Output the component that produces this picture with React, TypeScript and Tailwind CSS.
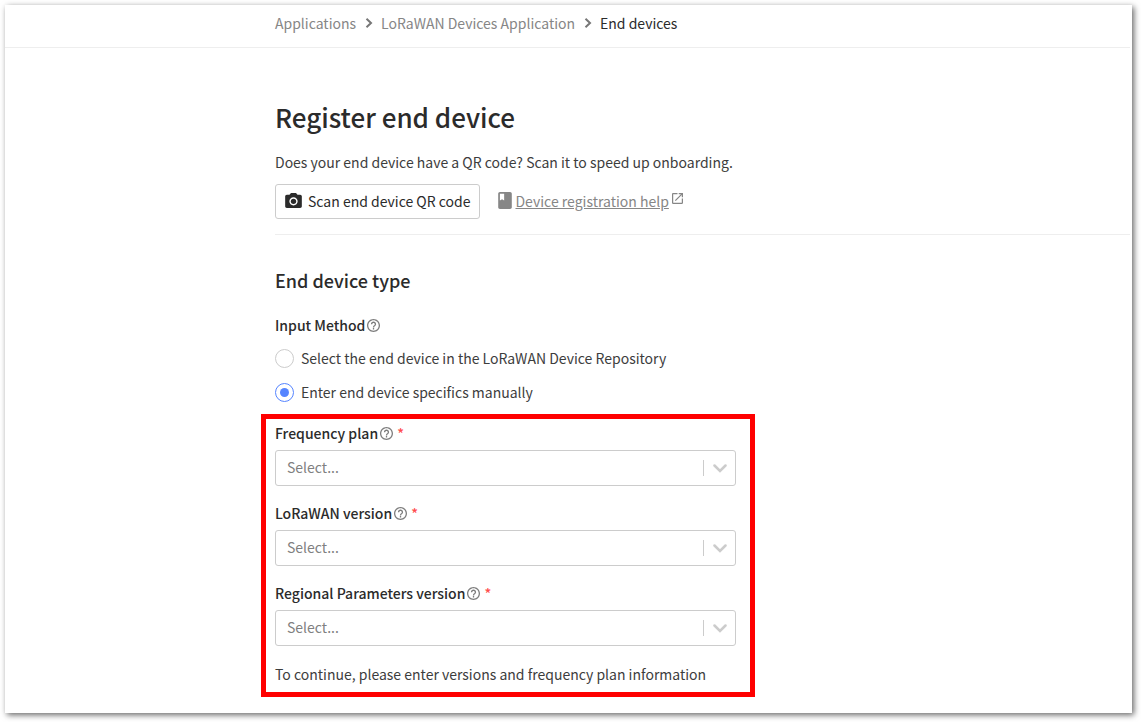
import { useState } from "react";

interface SelectField {
  id: string;
  label: string;
  options: string[];
}

const crumbs = ["Applications", "LoRaWAN Devices Application"];

const methods = [
  { value: "repository", label: "Select the end device in the LoRaWAN Device Repository" },
  { value: "manual", label: "Enter end device specifics manually" },
];

const fields: SelectField[] = [
  { id: "frequency-plan", label: "Frequency plan", options: [] },
  { id: "lorawan-version", label: "LoRaWAN version", options: [] },
  { id: "regional-version", label: "Regional Parameters version", options: [] },
];

function ChevronRight() {
  return (
    <svg viewBox="0 0 8 10" className="h-2.5 w-2 fill-none stroke-[#777777] stroke-2">
      <path d="M1.5 0.8 L6 5 L1.5 9.2" />
    </svg>
  );
}

function HelpIcon() {
  return (
    <svg viewBox="2 2 20 20" className="ml-0.5 size-[13px] fill-[#7d7d7d]">
      <path d="M11 18h2v-2h-2v2zm1-16C6.48 2 2 6.48 2 12s4.480 10 10 10 10-4.480 10-10S17.520 2 12 2zm0 18c-4.410 0-8-3.590-8-8s3.590-8 8-8 8 3.590 8 8-3.590 8-8 8zm0-14c-2.210 0-4 1.790-4 4h2c0-1.100.9-2 2-2s2 .9 2 2c0 2-3 1.750-3 5h2c0-2.250 3-2.500 3-5 0-2.210-1.790-4-4-4z" />
    </svg>
  );
}

function CameraIcon() {
  return (
    <svg viewBox="2 2 20 18" className="h-[15px] w-[17px] fill-[#2b2b2b]">
      <circle cx="12" cy="12" r="3.200" />
      <path d="M9 2L7.170 4H4c-1.100 0-2 .9-2 2v12c0 1.100.9 2 2 2h16c1.100 0 2-.9 2-2V6c0-1.100-.9-2-2-2h-3.170L15 2H9zm3 15c-2.760 0-5-2.240-5-5s2.240-5 5-5 5 2.240 5 5-2.240 5-5 5z" />
    </svg>
  );
}

function BookIcon() {
  return (
    <svg viewBox="4 2 16 20" className="h-[17px] w-3.5 fill-[#868686]">
      <path d="M18 2H6c-1.100 0-2 .9-2 2v16c0 1.100.9 2 2 2h12c1.100 0 2-.9 2-2V4c0-1.100-.9-2-2-2zM6 4h5v8l-2.500-1.500L6 12V4z" />
    </svg>
  );
}

function OpenInNewIcon() {
  return (
    <svg viewBox="3 3 18 18" className="mb-1 size-[11px] fill-[#868686]">
      <path d="M19 19H5V5h7V3H5c-1.110 0-2 .9-2 2v14c0 1.100.89 2 2 2h14c1.100 0 2-.9 2-2v-7h-2v7zM14 3v2h3.590l-9.830 9.830 1.410 1.410L19 6.410V10h2V3h-7z" />
    </svg>
  );
}

function SelectBox({ id, label, options }: SelectField) {
  return (
    <div>
      <div className="flex h-5 items-center font-medium text-[#2b2b2b]">
        <label htmlFor={id}>{label}</label>
        <HelpIcon />
        <span className="ml-1 text-[#ff4d4d]">*</span>
      </div>
      <div className="relative mt-[7px]">
        <select
          id={id}
          className="block h-9 w-full appearance-none rounded-[3px] border border-[#cccccc] bg-white pr-10 pb-0.5 pl-[11px] text-[#808080]"
        >
          <option>Select...</option>
          {options.map((o) => (
            <option key={o}>{o}</option>
          ))}
        </select>
        <div className="pointer-events-none absolute inset-y-0 right-[9px] flex items-center gap-[9px]">
          <span className="h-4 w-px bg-[#cccccc]" />
          <svg viewBox="0 0 14 9" className="h-[9px] w-3.5 fill-none stroke-[#cccccc] stroke-[2.5]">
            <path d="M1.500 1.500 L7 7 L12.500 1.500" strokeLinecap="round" />
          </svg>
        </div>
      </div>
    </div>
  );
}

export default function App() {
  const [method, setMethod] = useState("manual");

  return (
    <div className="flex min-h-screen bg-white pt-[5px] pr-[9px] pb-[9px] pl-[5px] font-['Noto_Sans_CJK_SC',sans-serif] text-sm leading-5 text-[#3d3d3d]">
      <div className="flex-1 bg-white shadow-[2px_2px_6px_0px_rgba(0,0,0,0.6)]">
        <nav className="mr-0.5 flex h-[43px] items-center gap-2 border-b border-[#eeeeee] pb-1.5 pl-[270px]">
          {crumbs.map((c) => (
            <div key={c} className="flex items-center gap-[9px]">
              <a href="#" className="text-[#868686]">
                {c}
              </a>
              <ChevronRight />
            </div>
          ))}
          <span className="text-[#2b2b2b]">End devices</span>
        </nav>

        <main className="mr-0.5 pl-[270px]">
          <div className="border-b border-[#eeeeee] pt-[51px] pb-[15px]">
            <h1 className="text-[26px] leading-9 font-medium text-[#2b2b2b]">
              Register end device
            </h1>
            <p className="mt-[17px]">Does your end device have a QR code? Scan it to speed up onboarding.</p>
            <div className="mt-3 flex items-center">
              <button className="flex h-[35px] items-center gap-1.5 rounded-[3px] border border-[#cccccc] px-[9px] pb-0.5 text-[#2b2b2b]">
                <CameraIcon />
                Scan end device QR code
              </button>
              <a href="#" className="ml-[18px] flex items-center gap-[3px] pb-0.5 text-[#868686]">
                <BookIcon />
                <span className="underline">Device registration help</span>
                <OpenInNewIcon />
              </a>
            </div>
          </div>

          <form className="pt-[31px]">
            <h2 className="text-lg leading-7 font-medium text-[#2b2b2b]">End device type</h2>
            <fieldset className="mt-[21px]">
              <legend className="flex h-5 items-center font-medium text-[#2b2b2b]">
                Input Method
                <HelpIcon />
              </legend>
              <div className="mt-[13px] flex flex-col gap-3.5">
                {methods.map((m) => (
                  <label key={m.value} className="flex items-center gap-[7px]">
                    <input
                      type="radio"
                      name="method"
                      value={m.value}
                      checked={method === m.value}
                      onChange={() => setMethod(m.value)}
                      className="grid size-[19px] appearance-none place-items-center rounded-full border border-[#cccccc] before:size-[9px] before:rounded-full checked:border-[#5685ff] checked:before:bg-[#5685ff]"
                    />
                    {m.label}
                  </label>
                ))}
              </div>
            </fieldset>

            <div className="mt-3 -ml-3.5 max-w-[494px] border-5 border-[#ff0000] pt-1 pr-3.5 pb-2 pl-[9px]">
              <div className="flex flex-col gap-[17px]">
                {fields.map((f) => (
                  <SelectBox key={f.id} {...f} />
                ))}
              </div>
              <p className="mt-[18px]">To continue, please enter versions and frequency plan information</p>
            </div>
          </form>
        </main>
      </div>
    </div>
  );
}
